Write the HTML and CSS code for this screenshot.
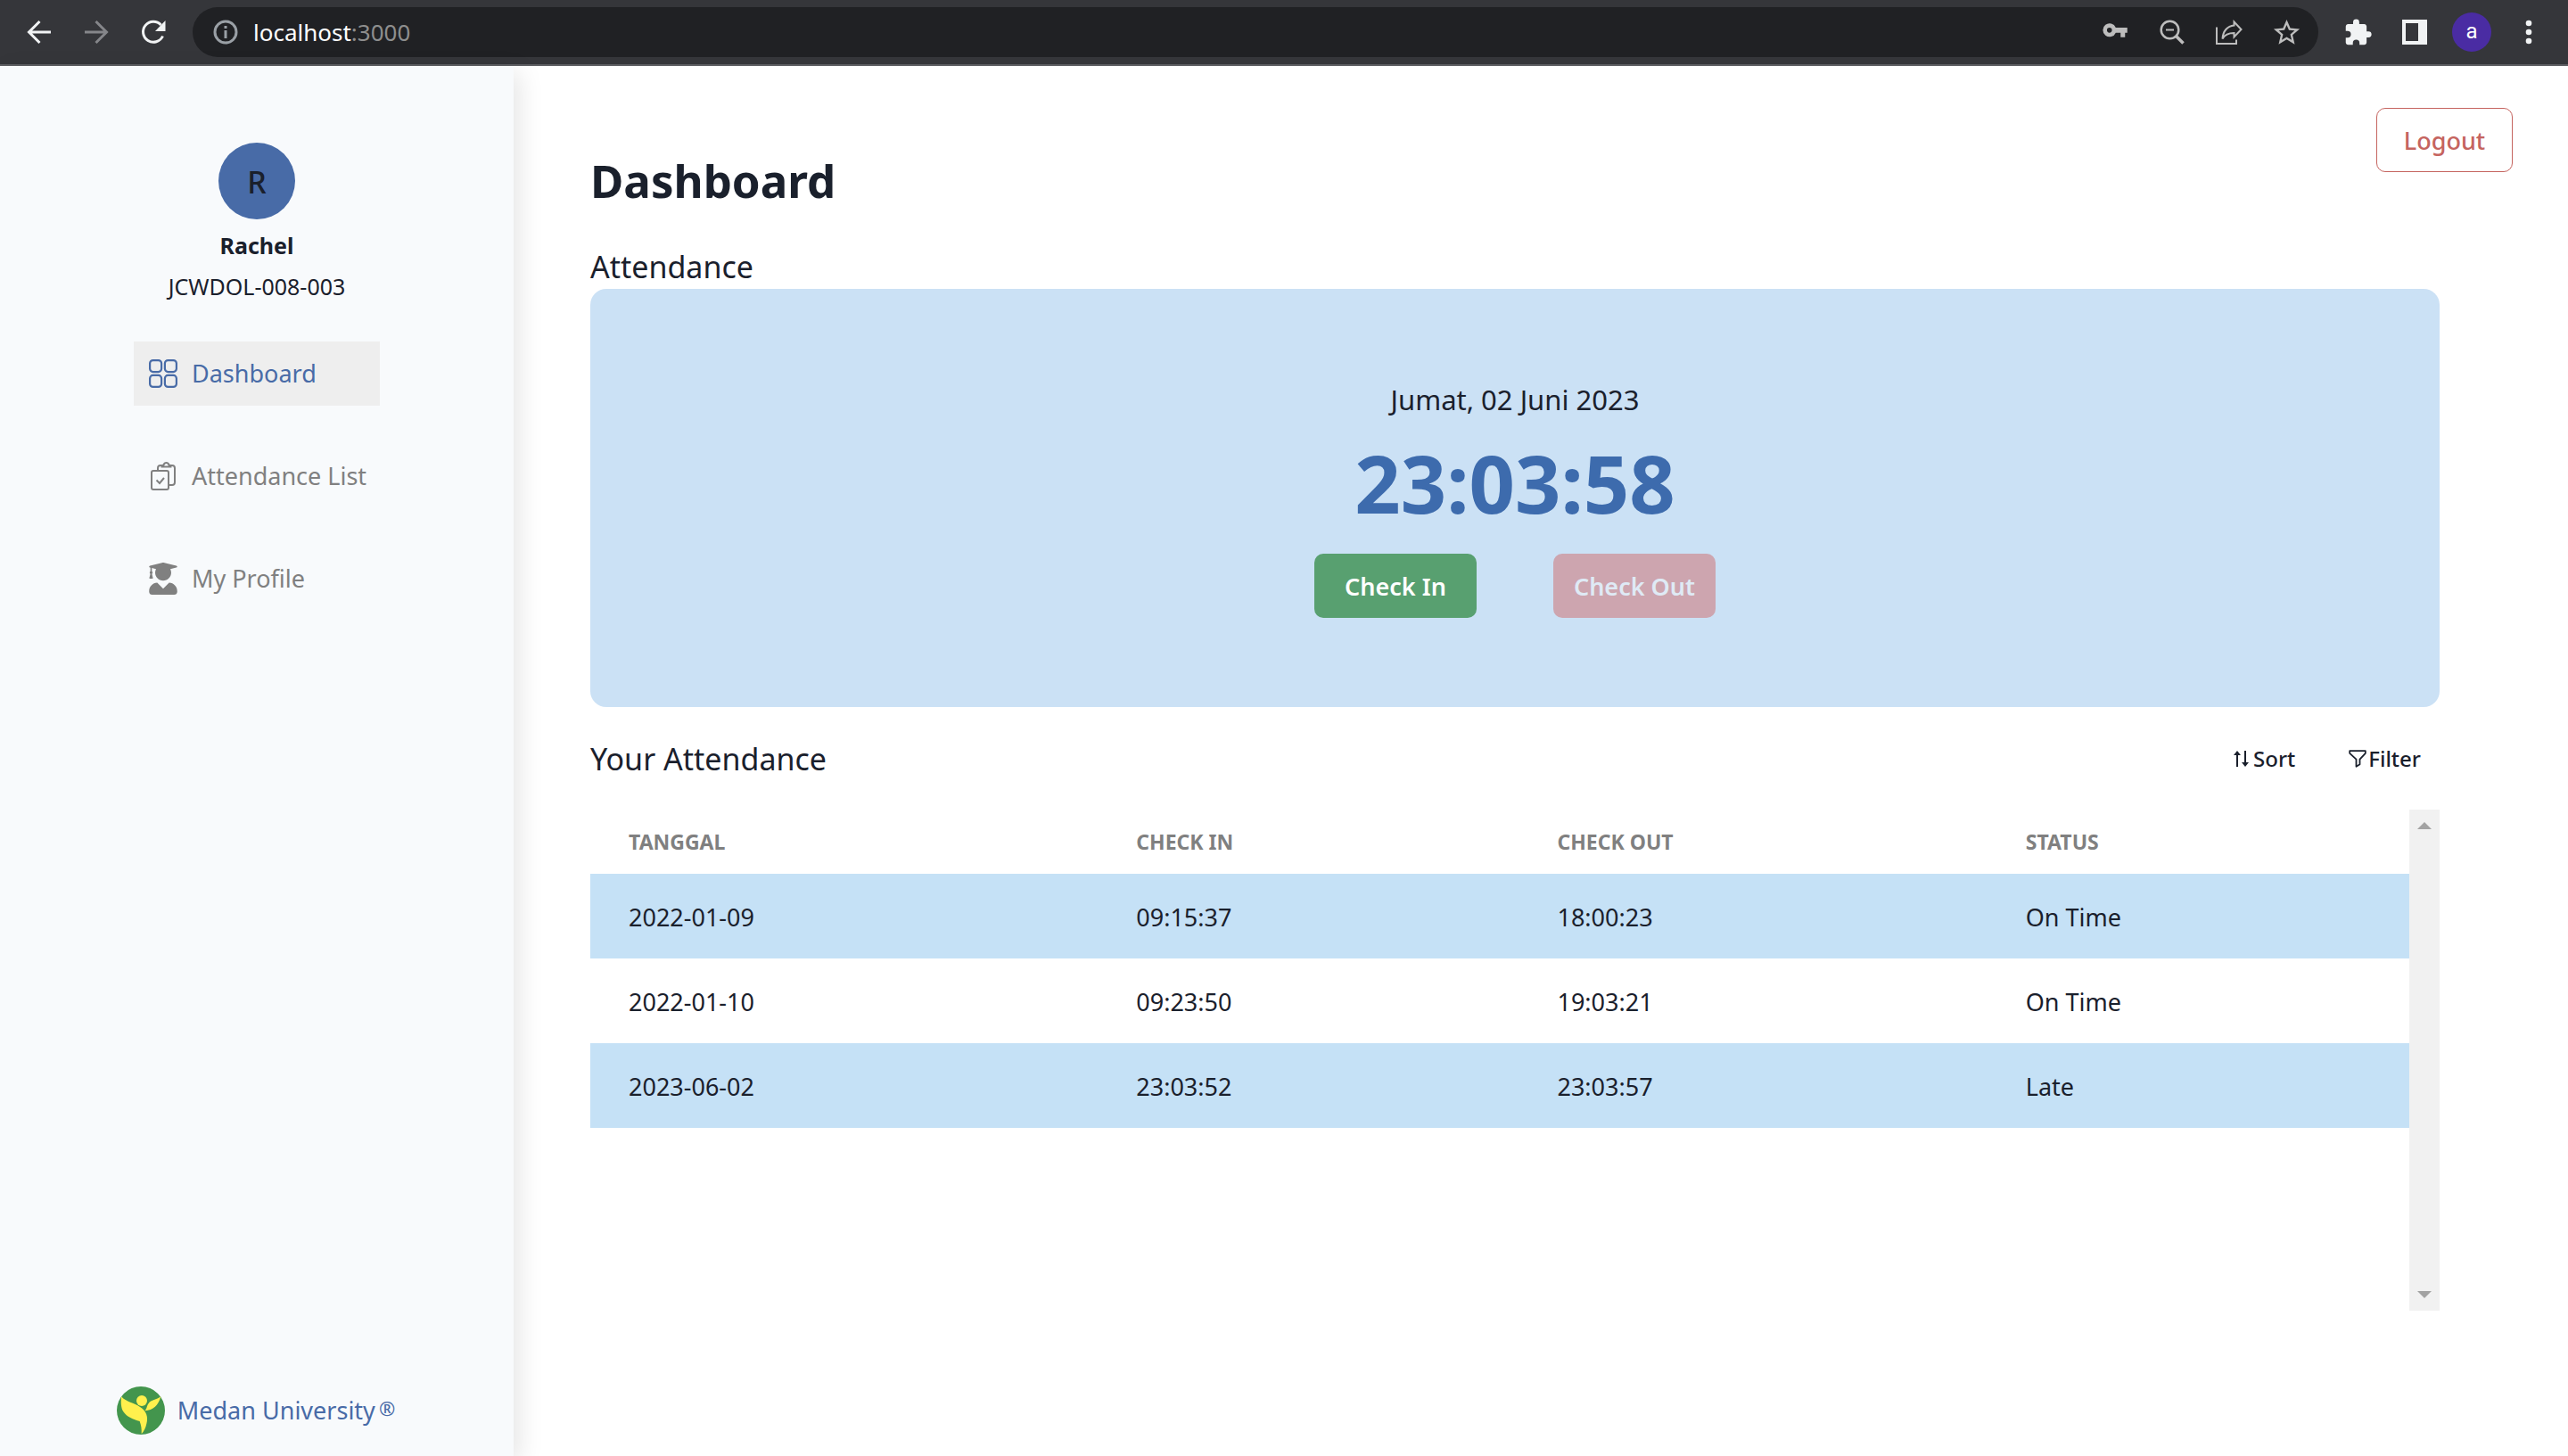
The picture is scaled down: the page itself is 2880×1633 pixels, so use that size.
FILE: index.html
```html
<!DOCTYPE html>
<html lang="en">
<head>
<meta charset="utf-8">
<meta name="viewport" content="width=device-width, initial-scale=1">
<title>Dashboard</title>
<link rel="stylesheet" href="styles.css">
</head>
<body>
<header class="toolbar">
  <button class="tool" aria-label="Back"><svg width="28" height="28" viewBox="0 0 28 28"><path d="M27 14H3M14.500 2L2.500 14l12 12" fill="none" stroke="#f1f3f4" stroke-width="3"/></svg></button>
  <button class="tool" aria-label="Forward"><svg width="28" height="28" viewBox="0 0 28 28"><path d="M1 14h24M13.500 2l12 12-12 12" fill="none" stroke="#85868a" stroke-width="3"/></svg></button>
  <button class="tool" aria-label="Reload"><svg width="28" height="28" viewBox="0 0 28 28"><path d="M24.500 18.500A11.500 11.500 0 1 1 22.500 6" fill="none" stroke="#f1f3f4" stroke-width="3"/><path d="M27.500 1v12H16z" fill="#f1f3f4"/></svg></button>
  <div class="omnibox">
    <svg width="28" height="28" viewBox="0 0 28 28"><circle cx="14" cy="14" r="12" fill="none" stroke="#9aa0a6" stroke-width="3"/><path d="M12.500 12h3v9h-3zM12.500 7h3v3h-3z" fill="#9aa0a6"/></svg>
    <div class="address" role="textbox" contenteditable="true" spellcheck="false" aria-label="Address">localhost<span class="port">:3000</span></div>
    <button class="tool" aria-label="Passwords"><svg width="30" height="30" viewBox="0 1 24 24"><path d="M12.650 9A6 6 0 1 0 12.650 13.500H17v4h4v-4h2V9zM7 13.500a2.250 2.250 0 1 1 0-4.500 2.250 2.250 0 0 1 0 4.500z" fill="#bdbdbd"/></svg></button>
    <button class="tool" aria-label="Zoom"><svg width="28" height="28" viewBox="0 0 28 28"><g fill="none" stroke="#bdbdbd" stroke-width="2.500"><circle cx="11.500" cy="11.500" r="9.800"/><path d="M7 11.500h9" stroke-width="2"/><path d="M18.500 18.500l8 8" stroke-width="3.500"/></g></svg></button>
    <button class="tool" aria-label="Share"><svg width="30" height="30" viewBox="0 0 30 30"><g fill="none" stroke="#bdbdbd" stroke-width="2"><path d="M1 9.500V28h22v-4.500"/><path d="M20.500 3.500l8 8.500-8 8.500v-4.500C14 16 10 18 7.500 22.500 8 14 13 8 20.500 7.500z"/></g></svg></button>
    <button class="tool" aria-label="Bookmark"><svg width="35" height="35" viewBox="0 0 24 24"><path d="M22 9.240l-7.190-.620L12 2 9.190 8.630 2 9.240l5.460 4.730L5.820 21 12 17.270 18.180 21l-1.630-7.030zM12 15.400l-3.760 2.270 1-4.280-3.320-2.880 4.380-.380L12 6.100l1.710 4.040 4.380.380-3.320 2.880 1 4.280z" fill="#bdbdbd"/></svg></button>
  </div>
  <button class="tool" aria-label="Extensions"><svg width="33" height="33" viewBox="0 0 24 24"><path d="M20.500 11H19V7c0-1.100-.9-2-2-2h-4V3.500a2.500 2.500 0 0 0-5 0V5H4c-1.100 0-2 .9-2 2v3.800h1.500a2.700 2.700 0 0 1 0 5.400H2V20c0 1.100.9 2 2 2h3.800v-1.500a2.700 2.700 0 0 1 5.400 0V22H17c1.100 0 2-.9 2-2v-4h1.500a2.500 2.500 0 0 0 0-5z" fill="#f1f3f4"/></svg></button>
  <button class="tool" aria-label="Side panel"><svg width="28" height="28" viewBox="0 0 28 28"><path d="M0 0h28v28H0zM4 4v20h14V4z" fill="#f1f3f4" fill-rule="evenodd"/></svg></button>
  <button class="tool" aria-label="Profile"><span class="profile">a</span></button>
  <button class="tool" aria-label="Menu"><svg width="8" height="28" viewBox="0 0 8 28"><g fill="#f1f3f4"><circle cx="4" cy="4" r="3.300"/><circle cx="4" cy="14" r="3.300"/><circle cx="4" cy="24" r="3.300"/></g></svg></button>
</header>

<div class="page">
  <aside class="sidebar">
    <div class="avatar">R</div>
    <p class="name">Rachel</p>
    <p class="student-id">JCWDOL-008-003</p>
    <nav class="nav">
      <a class="nav-link active" href="#dashboard"><svg width="32" height="32" viewBox="0 0 32 32"><g fill="none" stroke="currentColor" stroke-width="2.200"><rect x="1.100" y="1.100" width="13" height="13" rx="3.500"/><rect x="17.900" y="1.100" width="13" height="13" rx="3.500"/><rect x="1.100" y="17.900" width="13" height="13" rx="3.500"/><rect x="17.900" y="17.900" width="13" height="13" rx="3.500"/></g></svg>Dashboard</a>
      <a class="nav-link" href="#attendance"><svg width="32" height="32" viewBox="0 0 32 32"><g fill="none" stroke="currentColor" stroke-width="2"><rect x="3" y="10" width="19" height="21" rx="2"/><path d="M10 10V7a3 3 0 0 1 3-3h2M24 4h2a3 3 0 0 1 3 3v16a3 3 0 0 1-3 3h-4"/><path d="M14.500 5.500c0-1.500 1-2 2-2 .5-1.500 1.500-2.500 3-2.500s2.500 1 3 2.500c1 0 2 .5 2 2z"/><path d="M8.500 20.500l3.500 3.500 5-6"/></g></svg>Attendance List</a>
      <a class="nav-link" href="#profile"><svg width="32" height="36" viewBox="0 0 448 512"><path fill="currentColor" d="M319.400 320.600L224 416l-95.400-95.400C57.100 323.700 0 382.200 0 454.400v9.600c0 26.500 21.500 48 48 48h352c26.500 0 48-21.500 48-48v-9.600c0-72.200-57.100-130.700-128.600-133.800zM13.600 79.800l6.400 1.500v58.400c-7 4.200-12 11.500-12 20.300 0 8.400 4.600 15.400 11.100 19.700L3.500 242c-1.700 6.900 2.100 14 7.600 14h41.800c5.500 0 9.300-7.100 7.600-14l-15.600-62.300C51.400 175.400 56 168.400 56 160c0-8.800-5-16.100-12-20.300V87.100l66 15.900c-8.600 17.200-14 36.400-14 57 0 70.700 57.300 128 128 128s128-57.300 128-128c0-20.600-5.300-39.800-14-57l96.300-23.200c18.200-4.400 18.200-27.100 0-31.500l-190.400-46c-13-3.100-26.700-3.100-39.700 0L13.600 48.200c-18.100 4.400-18.100 27.200 0 31.600z"/></svg>My Profile</a>
    </nav>
    <footer class="brand">
      <svg width="54" height="54" viewBox="90 105 162 162"><circle cx="171" cy="186" r="81" fill="#43954d"/><g fill="#fff04d"><circle cx="174" cy="153" r="18"/><path d="M105 139C122 158 148 160 168 174C190 188 196 208 190 230C187 245 181 256 173 265C174 248 172 236 167 222C145 216 124 208 112 190C103 176 104 156 105 139z"/><path d="M238 139C230 168 213 186 184 187C192 180 190 171 197 162C205 150 224 150 238 139z"/></g></svg>
      <span>Medan University<span class="mark">®</span></span>
    </footer>
  </aside>

  <main class="content">
    <div class="title-bar">
      <h1>Dashboard</h1>
      <button class="btn logout">Logout</button>
    </div>
    <h2>Attendance</h2>
    <section class="card">
      <p class="date">Jumat, 02 Juni 2023</p>
      <p class="clock">23:03:58</p>
      <div class="actions">
        <button class="btn check-in">Check In</button>
        <button class="btn check-out" disabled>Check Out</button>
      </div>
    </section>
    <div class="list-bar">
      <h2>Your Attendance</h2>
      <div class="list-tools">
        <button class="tool-btn sort"><svg width="17" height="18" viewBox="0 0 17 18"><g fill="none" stroke="currentColor" stroke-width="2"><path d="M4 18V2M13 0v15" /></g><path d="M0 5l4-5 4 5zM9 13l4 5 4-5z" fill="currentColor"/></svg>Sort</button>
        <button class="tool-btn filter"><svg width="20" height="20" viewBox="0 0 20 20"><path d="M1.200 1.200h17.600v2.600l-6.300 6.800v5.700l-4 2.500v-8.200L1.200 3.800z" fill="none" stroke="currentColor" stroke-width="1.800" stroke-linejoin="round"/></svg>Filter</button>
      </div>
    </div>
    <div class="table-wrap">
      <table>
        <colgroup><col class="col-date"><col class="col-in"><col class="col-out"><col class="col-status"></colgroup>
        <thead><tr><th>TANGGAL</th><th>CHECK IN</th><th>CHECK OUT</th><th>STATUS</th></tr></thead>
        <tbody>
          <tr><td>2022-01-09</td><td>09:15:37</td><td>18:00:23</td><td>On Time</td></tr>
          <tr><td>2022-01-10</td><td>09:23:50</td><td>19:03:21</td><td>On Time</td></tr>
          <tr><td>2023-06-02</td><td>23:03:52</td><td>23:03:57</td><td>Late</td></tr>
        </tbody>
      </table>
      <div class="scroll-track" aria-hidden="true"><span class="arrow-up"></span><span class="arrow-down"></span></div>
    </div>
  </main>
</div>
</body>
</html>
```
FILE: styles.css
```css
* { box-sizing: border-box; }
body {
  margin: 0;
  min-height: 100vh;
  display: flex;
  flex-direction: column;
  background: #fff;
  color: #1a202c;
  font: 27px/36px "Noto Sans", "Open Sans", sans-serif;
}
h1, h2, p { margin: 0; }
button { font: inherit; color: inherit; border: 0; padding: 0; background: none; }
svg { display: block; flex: none; }

/* Browser toolbar */
.toolbar {
  display: flex;
  align-items: center;
  gap: 8px;
  padding: 8px 16px;
  background: #35363a;
  border-bottom: 2px solid #5d5e62;
}
.tool {
  flex: none;
  display: flex;
  align-items: center;
  justify-content: center;
  width: 56px;
  height: 56px;
}
.omnibox {
  flex: 1;
  display: flex;
  align-items: center;
  gap: 8px;
  margin: 0 8px;
  padding: 0 8px 0 23px;
  height: 56px;
  border-radius: 28px;
  background: #202124;
}
.address {
  flex: 1;
  padding-left: 9px;
  color: #fff;
  font-size: 26px;
  outline: none;
}
.port { color: #8e8e8e; }
.profile {
  width: 44px;
  height: 44px;
  border-radius: 50%;
  background: #4a2ca3;
  color: #fff;
  font: 24px/42px Roboto, sans-serif;
  text-align: center;
}

.page { flex: 1; display: flex; }

/* Sidebar */
.sidebar {
  width: 20%;
  display: flex;
  flex-direction: column;
  align-items: center;
  padding: 86px 0 24px;
  background: #f8fafc;
  box-shadow: 7px 7px 26px rgba(0, 0, 0, 0.1);
}
.avatar {
  width: 86px;
  height: 86px;
  margin-bottom: 11px;
  border-radius: 50%;
  background: #486ba7;
  font-size: 34px;
  font-weight: 500;
  line-height: 88px;
  text-align: center;
}
.name { font-size: 25px; font-weight: 700; }
.student-id { margin-top: 10px; font-size: 25px; }
.nav {
  display: flex;
  flex-direction: column;
  gap: 43px;
  width: 276px;
  margin-top: 44px;
}
.nav-link {
  display: flex;
  align-items: center;
  gap: 16px;
  height: 72px;
  padding: 0 17px;
  color: #808080;
  text-decoration: none;
  white-space: nowrap;
}
.nav-link.active { background: #eee; color: #486ba7; }
.brand {
  display: flex;
  align-items: center;
  gap: 14px;
  margin-top: auto;
  padding-right: 2px;
  color: #486ba7;
}
.mark { margin-left: 4px; font-size: 22px; line-height: 1; vertical-align: 4px; }

/* Main content */
.content { flex: 1; padding: 47px 144px 86px 86px; }
.title-bar {
  display: flex;
  justify-content: space-between;
  align-items: flex-start;
  margin: 0 -82px 40px 0;
}
h1 { margin-top: 48px; font-size: 51px; font-weight: 700; line-height: 66px; }
h2 { font-size: 34px; font-weight: 400; line-height: 48px; }
.title-bar + h2 { line-height: 49px; }
.btn {
  height: 72px;
  padding-top: 2px;
  border-radius: 10px;
  font-weight: 600;
}
.logout {
  width: 153px;
  border: 1px solid #c5645f;
  color: #c5645f;
  font-weight: 500;
}
.card {
  display: flex;
  flex-direction: column;
  align-items: center;
  padding: 103px 0 100px;
  border-radius: 18px;
  background: #cbe1f5;
}
.date { font-size: 31px; line-height: 42px; }
.clock {
  margin: 18px 0 26px;
  color: #3d6bad;
  font-size: 90px;
  font-weight: 700;
  line-height: 108px;
}
.actions { display: flex; gap: 86px; }
.check-in, .check-out { width: 182px; color: #fff; }
.check-in { background: #58a070; }
.check-out { background: #cda5af; color: #dfeaf5; }

.list-bar {
  display: flex;
  justify-content: space-between;
  align-items: center;
  margin: 34px 0 33px;
}
.list-tools { display: flex; gap: 18px; }
.tool-btn {
  display: flex;
  align-items: center;
  padding: 0 21px;
  font-size: 24px;
  font-weight: 500;
}
.sort { gap: 5px; }
.filter { gap: 2px; }

/* Attendance table */
.table-wrap { display: flex; align-items: flex-start; height: 562px; }
table { flex: 1; table-layout: fixed; border-collapse: collapse; }
.col-date { width: 569px; }
.col-in { width: 472px; }
.col-out { width: 525px; }
.col-status { width: 473px; }
th, td { padding: 0 0 0 43px; text-align: left; }
th { height: 72px; color: #808080; font-size: 23px; font-weight: 700; }
td { height: 95px; padding-top: 2px; }
tbody tr:nth-child(odd) { background: #c5e1f6; }
.scroll-track {
  flex: none;
  display: flex;
  flex-direction: column;
  justify-content: space-between;
  align-items: center;
  width: 34px;
  height: 100%;
  padding: 14px 0;
  background: #f1f1f1;
}
.arrow-up, .arrow-down { border: 8px solid transparent; }
.arrow-up { border-top: 0; border-bottom-color: #a3a3a3; }
.arrow-down { border-bottom: 0; border-top-color: #a3a3a3; }
```
